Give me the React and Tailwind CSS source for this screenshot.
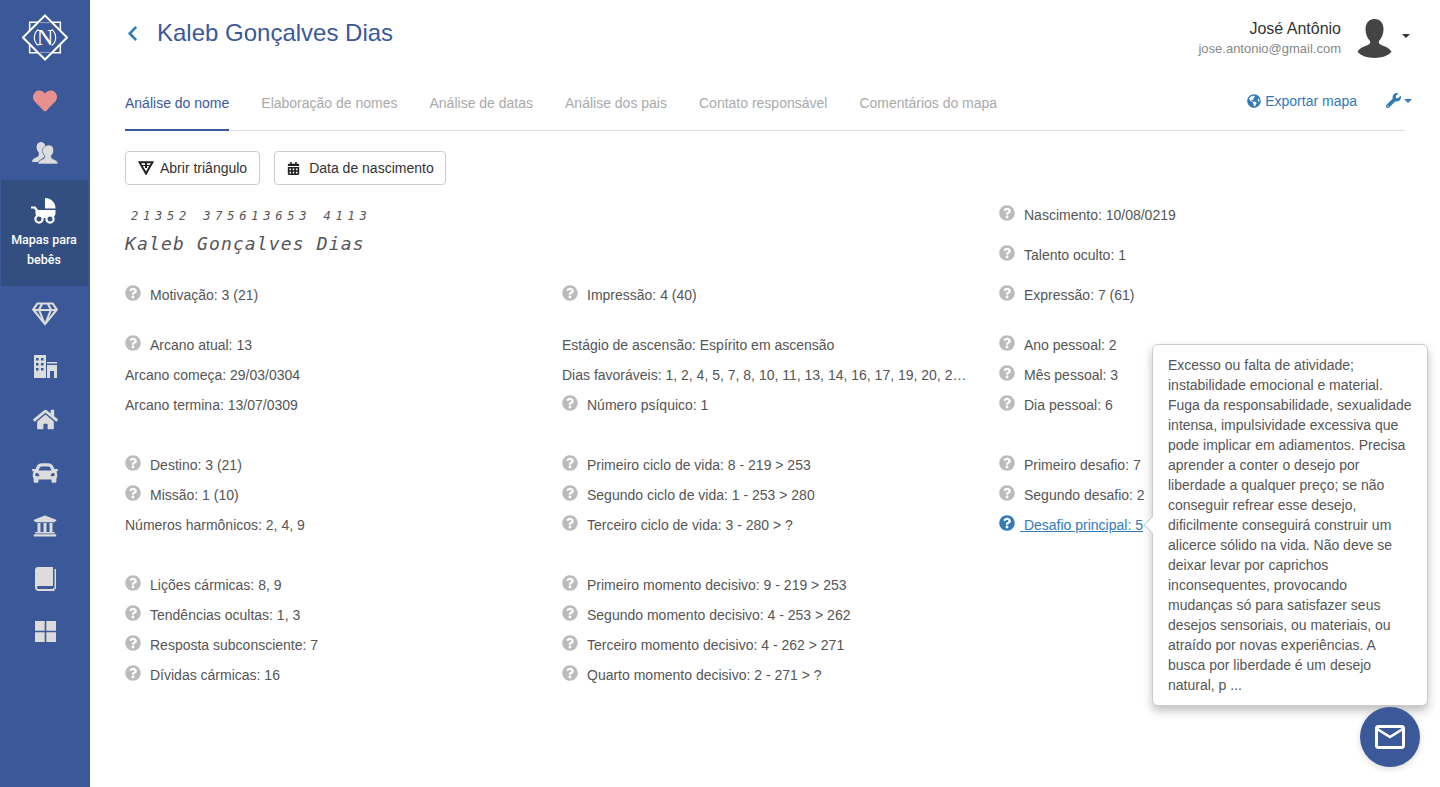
import React from 'react';
import { FaHeart, FaRegGem, FaHome, FaCar, FaUniversity, FaQuestionCircle, FaGlobeAmericas, FaWrench, FaCalendarAlt, FaChevronLeft } from 'react-icons/fa';
import { MdMailOutline } from 'react-icons/md';

const Logo = () => (
  <svg width="46" height="47" viewBox="0 0 48 48" fill="none" stroke="#fff" strokeWidth="1.5">
    <path d="M24 1 47 24 24 47 1 24Z" strokeWidth="2" />
    <path d="M8 17V8h9M31 8h9v9M40 31v9h-9M17 40H8v-9" strokeWidth="1.6" />
    <path d="M17 15.500C11.500 20 11.500 28 17 32.500M31 15.500C36.500 20 36.500 28 31 32.500" strokeWidth="1.2" />
    <path d="M19 8.500h10M19 39.500h10" strokeWidth="1" opacity=".5" />
    <text x="24" y="32" textAnchor="middle" fontFamily="'Liberation Serif', serif" fontSize="24" fill="#fff" stroke="none">N</text>
  </svg>
);

const Friends = () => (
  <svg width="26" height="24" viewBox="0 0 26 24">
    <path fill="#dcdcdc" d="M9 1c2.800 0 4.400 2.200 4.400 5 0 2.300-.9 4.300-2.200 5.400v2c1 .5 1.800 1 2.500 1.400L6 21H0c0-2.400 1.800-3.600 4-4.500 1.500-.6 2.800-1.200 2.800-2.500v-2.500C5.500 10.300 4.600 8.300 4.600 6 4.600 3.200 6.200 1 9 1Z" />
    <path fill="#dcdcdc" stroke="#3b5998" strokeWidth=".6" d="M17 4c2.900 0 4.600 2.300 4.600 5.200 0 2.300-1 4.300-2.300 5.400v1.500c0 1.300 1.400 1.800 3 2.400 1.900.8 3.700 1.800 3.700 4.500H6c0-2.700 1.800-3.700 3.700-4.500 1.600-.6 3-1.100 3-2.400v-1.500c-1.300-1.100-2.300-3.100-2.300-5.400C10.400 6.300 14.100 4 17 4Z" />
  </svg>
);

const Carriage = () => (
  <svg width="26" height="26" viewBox="0 0 26 26">
    <path fill="#fff" d="M14 0c6 0 10.500 4.500 10.500 10.500H14Z" />
    <path fill="#fff" d="M0 8.500h4.500l2.500 3.500h17.500v3c0 2.500-1.500 4-3.500 5H8c-2 -1-3.500-2.500-3.500-5v-2.500L3 10.500H0Z" />
    <circle cx="8" cy="21" r="3.600" fill="#334f82" stroke="#fff" strokeWidth="2.200" />
    <circle cx="19" cy="21" r="3.600" fill="#334f82" stroke="#fff" strokeWidth="2.200" />
  </svg>
);

const Buildings = () => (
  <svg width="23" height="23" viewBox="0 0 23 23" fill="#dcdcdc">
    <path fillRule="evenodd" d="M0 0h12v23H0ZM2 3v2.500h2.500V3Zm5 0v2.500h2.500V3ZM2 8v2.500h2.500V8Zm5 0v2.500h2.500V8ZM2 13v2.500h2.500V13Zm5 0v2.500h2.500V13Z" />
    <path d="M13 7h10v1.500H13Z" />
    <path d="M13 10h10v13h-3v-7h-4v7h-3Z" />
  </svg>
);

const Book = () => (
  <svg width="21" height="24" viewBox="0 0 21 24">
    <path fill="#dcdcdc" d="M3 0h15v19H3.500C2.500 19 2 19.700 2 20.500S2.500 22 3.500 22H18v-1h1.500v3H3.500C1.500 24 0 22.500 0 20.500V3C0 1.300 1.300 0 3 0Z" />
    <path fill="#dcdcdc" d="M19.500 2H21v20h-1.500Z" />
  </svg>
);

const Grid = () => (
  <svg width="21" height="21" viewBox="0 0 21 21" fill="#dcdcdc">
    <path d="M0 0h9.700v9.700H0ZM11.300 0H21v9.700h-9.700ZM0 11.300h9.700V21H0ZM11.300 11.300H21V21h-9.700Z" />
  </svg>
);

const Avatar = () => (
  <svg width="35" height="39" viewBox="0 0 34 39" fill="#444">
    <path d="M17 0c6 0 9 4.500 9 10.500 0 4.500-2 9-4.500 11.500-.8 2 .5 3.500 4 4.800 3.500 1.200 7 3 8.500 6C30.500 37 24 39 17 39S3.500 37 0 32.800c1.500-3 5-4.800 8.500-6 3.500-1.300 4.800-2.800 4-4.800C10 19.500 8 15 8 10.500 8 4.500 11 0 17 0Z" />
  </svg>
);

const Triangle = () => (
  <svg width="16" height="14" viewBox="0 0 16 14" fill="none" stroke="#222">
    <path d="M1.500 1.200h13L8 12.600Z" strokeWidth="2" />
    <path d="M8 1v6" strokeWidth="2" />
    <path d="M4 4.500h8" strokeWidth="1" />
  </svg>
);

const NavIcon = ({ children, className }) => (
  <div className={`h-[53px] flex items-center justify-center ${className || ''}`}>{children}</div>
);

const Sidebar = () => (
  <aside className="w-[90px] shrink-0 bg-[#3b5998] flex flex-col items-center">
    <div className="h-[74px] flex items-center justify-center w-full pt-[1px]"><Logo /></div>
    <NavIcon><FaHeart size={24} color="#e88f8f" /></NavIcon>
    <NavIcon className="-mt-[1px]"><Friends /></NavIcon>
    <div className="w-[87px] ml-[-2px] h-[106px] mt-[1px] bg-[#334f82] flex flex-col items-center pt-[18px]">
      <Carriage />
      <div className="text-white font-['Roboto',sans-serif] text-[12.5px] font-medium leading-[20px] text-center mt-[6px] w-[74px]">Mapas para bebês</div>
    </div>
    <NavIcon className="mt-[1px]"><FaRegGem size={26} color="#dcdcdc" /></NavIcon>
    <NavIcon><Buildings /></NavIcon>
    <NavIcon><FaHome size={25} color="#dcdcdc" /></NavIcon>
    <NavIcon><FaCar size={26} color="#dcdcdc" /></NavIcon>
    <NavIcon><FaUniversity size={24} color="#dcdcdc" /></NavIcon>
    <NavIcon><Book /></NavIcon>
    <NavIcon><Grid /></NavIcon>
  </aside>
);

// linha de dado, com ou sem icone de ajuda
const Item = ({ label, help = true, tall, active, truncate }) => (
  <div className={`flex items-center ${tall ? 'h-[40px]' : 'h-[30px]'} ${active ? 'text-[#337ab7]' : ''}`}>
    {help && (
      <FaQuestionCircle size={16} color={active ? '#337ab7' : '#bbbbbb'} className={`shrink-0 -mt-[4px] ${active ? 'mr-[5px]' : 'mr-[9px]'}`} />
    )}
    <span className={`${truncate ? 'truncate' : 'whitespace-nowrap'} ${active ? 'underline' : ''}`}>{active ? '\u00a0' : ''}{label}</span>
  </div>
);

const Section = ({ className, col1, col2, col3 }) => (
  <div className={`grid grid-cols-[404px_405px_1fr] gap-x-[33px] ${className || ''}`}>
    <div>{col1}</div>
    <div className="min-w-0">{col2}</div>
    <div className="-ml-[1px]">{col3}</div>
  </div>
);

const tabs = ['Análise do nome', 'Elaboração de nomes', 'Análise de datas', 'Análise dos pais', 'Contato responsável', 'Comentários do mapa'];

const tooltipText = 'Excesso ou falta de atividade; instabilidade emocional e material. Fuga da responsabilidade, sexualidade intensa, impulsividade excessiva que pode implicar em adiamentos. Precisa aprender a conter o desejo por liberdade a qualquer preço; se não conseguir refrear esse desejo, dificilmente conseguirá construir um alicerce sólido na vida. Não deve se deixar levar por caprichos inconsequentes, provocando mudanças só para satisfazer seus desejos sensoriais, ou materiais, ou atraído por novas experiências. A busca por liberdade é um desejo natural, p ...';

export default function App() {
  return (
    <div className="flex h-[787px] overflow-hidden bg-white font-['Liberation_Sans',Arial,sans-serif] text-[14px] text-[#555]">
      <Sidebar />
      <main className="relative flex-1 pl-[35px] pr-[35px]">
        <header className="flex justify-between h-[80px]">
          <div className="flex items-center h-[66px] text-[24px] text-[#3b5998]">
            <FaChevronLeft size={17} color="#337ab7" className="-ml-[1px] mr-[16px]" />
            Kaleb Gonçalves Dias
          </div>
          <div className="flex items-start pt-[18px] -mr-[5px]">
            <div className="text-right">
              <div className="text-[16px] leading-[20px] mt-[1px] text-[#333]">José Antônio</div>
              <div className="text-[13px] leading-[20px] text-[#888]">jose.antonio@gmail.com</div>
            </div>
            <div className="ml-[16px] mt-[1px]"><Avatar /></div>
            <div className="ml-[10px] mt-[16px] w-0 h-0 border-x-[4px] border-x-transparent border-t-[4px] border-t-[#333]" />
          </div>
        </header>

        <nav className="flex justify-between h-[51px] border-b border-[#ddd]">
          <div className="flex gap-x-[32px]">
            {tabs.map((t, i) => (
              <div key={t} className={`h-[51px] pt-[13px] leading-[20px] ${i === 0 ? 'text-[#3b5998] border-b-2 border-[#3b5998]' : 'text-[#aaa]'}`}>{t}</div>
            ))}
          </div>
          <div className="flex pt-[11px] h-[40px] text-[#337ab7] -mr-[7px]">
            <FaGlobeAmericas size={14} className="mt-[3px] mr-[4px]" />
            <span className="leading-[20px] mr-[1px]">Exportar mapa</span>
            <FaWrench size={15} className="ml-[28px] mt-[2px]" />
            <div className="ml-[3px] mt-[8px] w-0 h-0 border-x-[4px] border-x-transparent border-t-[4px] border-t-[#337ab7]" />
          </div>
        </nav>

        <div className="flex gap-x-[14px] mt-[20px]">
          <button className="h-[34px] px-[12px] flex items-center gap-x-[6px] border border-[#ccc] rounded-[4px] text-[#333] bg-white"><Triangle />Abrir triângulo</button>
          <button className="h-[34px] pl-[12px] pr-[11px] flex items-center gap-x-[9px] border border-[#ccc] rounded-[4px] text-[#333] bg-white"><FaCalendarAlt size={13} color="#222" />Data de nascimento</button>
        </div>

        <Section
          className="mt-[15px]"
          col1={
            <div className="h-[80px] italic font-['DejaVu_Sans_Mono',monospace] text-[#555]">
              <div className="text-[12px] leading-[14px] pt-[9px] pl-[6px] whitespace-pre tracking-[4.8px]">21352 375613653 4113</div>
              <div className="text-[18px] leading-[24px] mt-[9px] tracking-[1.15px]">Kaleb Gonçalves Dias</div>
            </div>
          }
          col2={<div className="h-[80px]" />}
          col3={
            <div className="h-[80px] -mt-[5px]">
              <Item tall label="Nascimento: 10/08/0219" />
              <Item tall label="Talento oculto: 1" />
            </div>
          }
        />
        <Section
          col1={<Item label="Motivação: 3 (21)" />}
          col2={<Item label="Impressão: 4 (40)" />}
          col3={<Item label="Expressão: 7 (61)" />}
        />
        <Section
          className="mt-[20px]"
          col1={<><Item label="Arcano atual: 13" /><Item help={false} label="Arcano começa: 29/03/0304" /><Item help={false} label="Arcano termina: 13/07/0309" /></>}
          col2={<><Item help={false} label="Estágio de ascensão: Espírito em ascensão" /><Item help={false} truncate label="Dias favoráveis: 1, 2, 4, 5, 7, 8, 10, 11, 13, 14, 16, 17, 19, 20, 22, 23, 25, 26, 28, 29, 31" /><Item label="Número psíquico: 1" /></>}
          col3={<><Item label="Ano pessoal: 2" /><Item label="Mês pessoal: 3" /><Item label="Dia pessoal: 6" /></>}
        />
        <Section
          className="mt-[30px]"
          col1={<><Item label="Destino: 3 (21)" /><Item label="Missão: 1 (10)" /><Item help={false} label="Números harmônicos: 2, 4, 9" /></>}
          col2={<><Item label="Primeiro ciclo de vida: 8 - 219 > 253" /><Item label="Segundo ciclo de vida: 1 - 253 > 280" /><Item label="Terceiro ciclo de vida: 3 - 280 > ?" /></>}
          col3={<><Item label="Primeiro desafio: 7" /><Item label="Segundo desafio: 2" /><Item active label="Desafio principal: 5" /></>}
        />
        <Section
          className="mt-[30px]"
          col1={<><Item label="Lições cármicas: 8, 9" /><Item label="Tendências ocultas: 1, 3" /><Item label="Resposta subconsciente: 7" /><Item label="Dívidas cármicas: 16" /></>}
          col2={<><Item label="Primeiro momento decisivo: 9 - 219 > 253" /><Item label="Segundo momento decisivo: 4 - 253 > 262" /><Item label="Terceiro momento decisivo: 4 - 262 > 271" /><Item label="Quarto momento decisivo: 2 - 271 > ?" /></>}
          col3={null}
        />

        {/* popover do desafio */}
        <div className="absolute left-[1062px] top-[344px] w-[276px] h-[362px] bg-white border border-[#ccc] rounded-[6px] shadow-[0_5px_10px_rgba(0,0,0,0.25)] pl-[15px] pr-[13px] pt-[10px] leading-[20px] text-[#555]">
          {tooltipText}
          <div className="absolute -left-[7px] top-[174px] w-[12px] h-[12px] rotate-45 bg-white border-l border-b border-[#ccc]" />
        </div>

        <button className="absolute left-[1270px] top-[707px] w-[60px] h-[60px] rounded-full bg-[#3b5998] flex items-center justify-center shadow-[0_2px_6px_rgba(0,0,0,0.15)]">
          <MdMailOutline size={36} color="#fff" />
        </button>
      </main>
    </div>
  );
}
